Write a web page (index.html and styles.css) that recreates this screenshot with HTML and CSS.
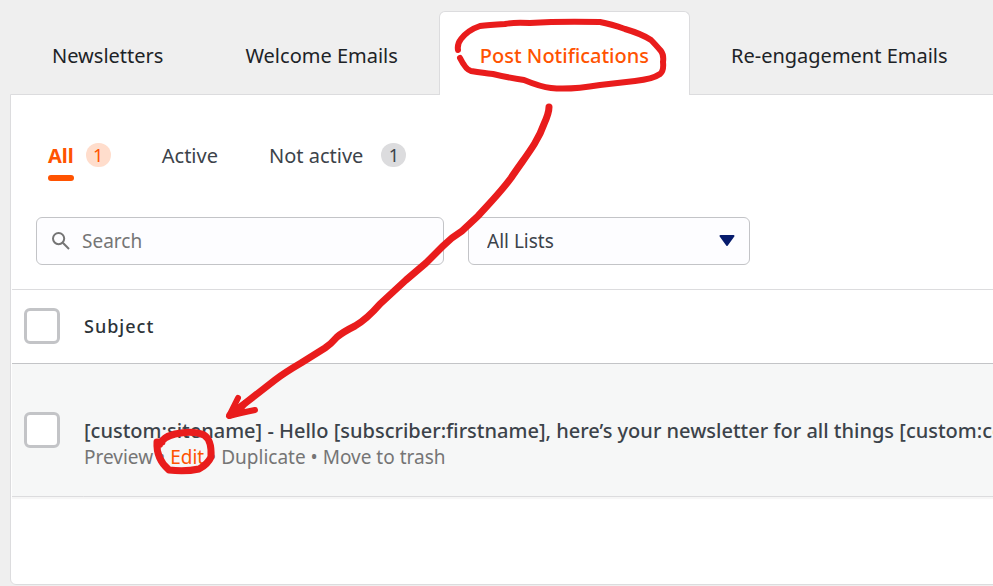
FILE: index.html
```
<!DOCTYPE html>
<html lang="en">
<head>
  <meta charset="UTF-8" />
  <title>Emails</title>
  <link rel="stylesheet" href="styles.css">
</head>
<body>

  <nav class="tabs">
    <a class="tab" href="#newsletters">Newsletters</a>
    <a class="tab" href="#welcome">Welcome Emails</a>
    <a class="tab active" href="#notifications">Post Notifications</a>
    <a class="tab" href="#re-engagement">Re-engagement Emails</a>
  </nav>

  <main class="panel">
    <div class="statuses">
      <a class="status current" href="#all"><span class="status-name">All</span><span class="count">1</span></a>
      <a class="status" href="#active"><span class="status-name">Active</span></a>
      <a class="status not-active" href="#not-active"><span class="status-name">Not active</span><span class="count">1</span></a>
    </div>

    <form class="filters">
      <label class="search">
        <svg class="search-icon" viewBox="0 0 18 18" aria-hidden="true">
          <circle cx="6.6" cy="6.6" r="5.6" />
          <path d="M10.8 10.8l6.2 6.2" />
        </svg>
        <input type="text" placeholder="Search" aria-label="Search" />
      </label>
      <div class="list-filter">
        <select aria-label="List">
          <option>All Lists</option>
        </select>
        <svg class="arrow" viewBox="0 0 16 11" aria-hidden="true">
          <path d="M1.5 1h13L8 10z" />
        </svg>
      </div>
    </form>

    <table class="emails">
      <thead>
        <tr>
          <th class="check"><input type="checkbox" aria-label="Select all" /></th>
          <th class="subject">Subject</th>
        </tr>
      </thead>
      <tbody>
        <tr>
          <td class="check"><input type="checkbox" aria-label="Select email" /></td>
          <td class="email">
            <a class="title" href="#email">[custom:sitename] - Hello [subscriber:firstname], here’s your newsletter for all things [custom:co</a>
            <div class="actions">
              <a href="#preview">Preview</a> • <a class="edit" href="#edit">Edit</a> • <a href="#duplicate">Duplicate</a> • <a href="#trash">Move to trash</a>
            </div>
          </td>
        </tr>
      </tbody>
    </table>
  </main>

  <!-- hand-drawn marker strokes over the page -->
  <svg class="marker" width="993" height="586" viewBox="0 0 993 586" aria-hidden="true">
    <path d="M458 50Q457 44 461 39Q468 30 480 26Q488 25 505 24Q514 22 530 23Q560 21 600 22Q611 24 625 29Q642 34 651 40Q655 44 661 51Q664 55 663 62Q664 71 660 74Q653 79 635 81Q617 83 600 85Q570 90 551 88Q541 87 524 80Q510 78 493 74Q484 73 471 71Q466 70 460 58" />
    <path class="thick" d="M549 107Q549 113 544 124C537 144 525 157 511 178C500 193 486 207 478 216L462 231Q452 237 443 246L426 263L406 280L380 304Q367 319 355 326Q343 332 337 337Q331 344 325 348L301 363Q284 373 275 380L248 401L230 415" />
    <path d="M238 398L229 416Q240 413 255 410M231 414L245 403L240 410" />
    <path class="thick" d="M160 444Q163 437 175 434Q193 430 204 435Q212 440 211 457Q208 464 199 469Q185 472 169 470Q156 459 157 442L162 442" />
  </svg>

</body>
</html>
```
FILE: styles.css
```
* {
  box-sizing: border-box;
}

body {
  margin: 0;
  padding: 11px 0 0 10px;
  background: #efefef;
  color: #3c434a;
  font-family: "Segoe UI", "Noto Sans", sans-serif;
  font-size: 19px;
  line-height: 26px;
  overflow: hidden;
}

a {
  color: inherit;
  text-decoration: none;
}

.tabs {
  display: flex;
  padding-left: 1px;
  color: #1d2327;
  font-size: 20px;
  white-space: nowrap;
}

.tab {
  padding: 31px 40px 25px;
  border: 1px solid transparent;
  border-bottom: 0;
}

.tab.active {
  position: relative;
  margin-bottom: -1px;
  background: #fff;
  border-color: #dcdcde;
  border-radius: 6px 6px 0 0;
  color: #ff5301;
  font-weight: 500;
}

.panel {
  margin-right: -10px;
  padding: 0 0 87px 1px;
  background: #fff;
  border: 1px solid #dcdcde;
  border-radius: 0 0 6px 6px;
}

.statuses {
  display: flex;
  gap: 51px;
  padding: 48px 36px 36px;
  font-size: 20px;
}

.status {
  display: flex;
  align-items: flex-start;
  gap: 12px;
}

.not-active {
  gap: 18px;
}

.status-name {
  padding-bottom: 6px;
  border-bottom: 6px solid transparent;
}

.current {
  color: #ff5301;
}

.current .status-name {
  position: relative;
  font-weight: bold;
}

.current .status-name::after {
  content: "";
  position: absolute;
  left: 0;
  right: 0;
  bottom: -6px;
  height: 6px;
  border-radius: 3px;
  background: #ff5301;
}

.count {
  min-width: 25px;
  border-radius: 12px;
  background: #dcdcde;
  font-size: 18px;
  line-height: 24px;
  text-align: center;
}

.current .count {
  background: #ffddcc;
}

.filters {
  display: flex;
  gap: 24px;
  padding: 0 24px 24px;
}

.search,
.list-filter {
  display: flex;
  align-items: center;
  height: 48px;
  background: #fdfdff;
  border: 1px solid #c3c4c7;
  border-radius: 6px;
}

.search {
  flex: 0 1 408px;
  gap: 12px;
  padding: 0 15px;
}

.search-icon {
  flex: none;
  width: 18px;
  height: 18px;
  fill: none;
  stroke: #757575;
  stroke-width: 2;
}

.search input {
  flex: 1;
  min-width: 0;
  padding: 0;
  border: 0;
  background: none;
  font: inherit;
}

.search input::placeholder {
  color: #757575;
}

.list-filter {
  position: relative;
  flex: 0 1 282px;
}

.list-filter select {
  width: 100%;
  height: 100%;
  padding: 0 40px 0 18px;
  border: 0;
  background: none;
  color: #3c434a;
  font: inherit;
  appearance: none;
}

.arrow {
  position: absolute;
  right: 14px;
  top: 17px;
  width: 16px;
  height: 11px;
  fill: #071c6d;
  stroke: #071c6d;
  stroke-width: 2;
  stroke-linejoin: round;
  pointer-events: none;
}

.emails {
  width: 100%;
  border-collapse: separate;
  border-spacing: 0;
  border-top: 1px solid #dcdcde;
  table-layout: fixed;
}

th,
td {
  padding: 0;
  text-align: left;
  vertical-align: top;
}

th {
  height: 74px;
  padding-bottom: 2px;
  border-bottom: 1px solid #c3c4c7;
  vertical-align: middle;
}

td {
  height: 133px;
  background: #f6f7f7;
  border-bottom: 1px solid #dcdcde;
  box-shadow: 0 2px 1px #f6f6f6;
}

.check {
  width: 72px;
  padding-left: 12px;
}

td.check {
  padding-top: 48px;
}

.check input {
  display: block;
  width: 36px;
  height: 36px;
  margin: 0;
  background: #fff;
  border: 3px solid #c3c4c7;
  border-radius: 6px;
  appearance: none;
}

.subject {
  color: #2c3338;
  font-size: 18px;
  font-weight: 500;
  letter-spacing: 1px;
}

.email {
  padding-top: 54px;
  white-space: nowrap;
}

.title {
  display: block;
  font-size: 20px;
  font-weight: 500;
}

.actions {
  color: #757575;
}

.edit {
  color: #ff5301;
}

.marker {
  position: absolute;
  top: 0;
  left: 0;
  fill: none;
  stroke: #e91c1c;
  stroke-width: 6;
  stroke-linecap: round;
  stroke-linejoin: round;
  pointer-events: none;
}

.marker .thick {
  stroke-width: 7;
}
```
